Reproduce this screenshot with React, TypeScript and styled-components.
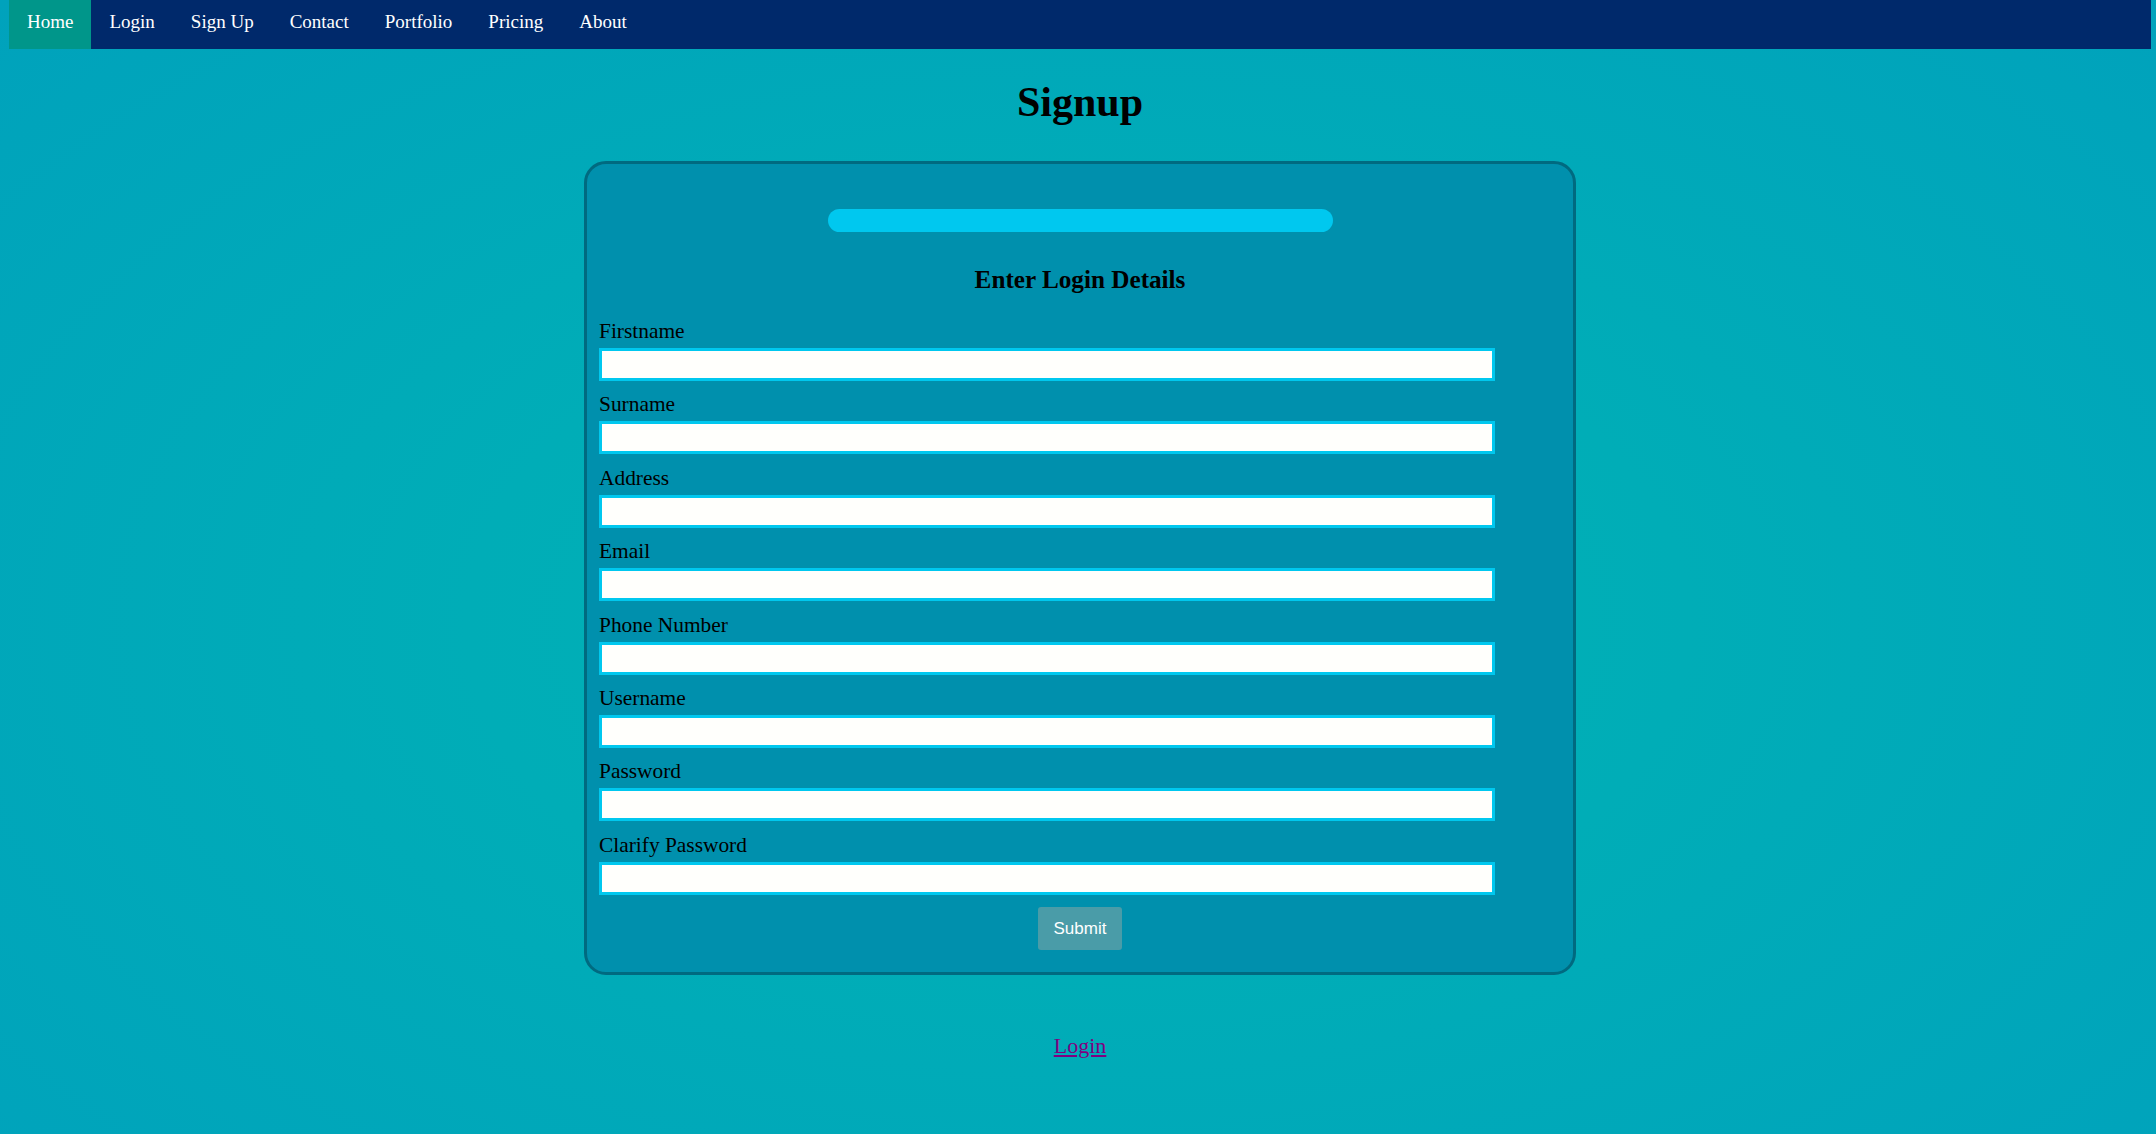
import React from 'react'
import styled, { createGlobalStyle } from 'styled-components'

const GlobalStyle = createGlobalStyle`
  html, body {
    margin: 0;
    padding: 0;
  }
  body {
    min-height: 100vh;
    font-family: "Liberation Serif", "Times New Roman", serif;
    font-size: 22px;
    color: #000;
    background: radial-gradient(ellipse at 50% 55%, #00b3b5 0%, #00adb7 40%, #00a2bc 100%);
    background-attachment: fixed;
  }
`

const Page = styled.div`
  min-height: 100vh;
  padding: 0 5px 0 9px;
  display: flex;
  flex-direction: column;
  align-items: center;
`

const NavBar = styled.nav`
  align-self: stretch;
  height: 49px;
  display: flex;
  background-color: #00296b;
`

const NavLink = styled.a<{ $active?: boolean }>`
  display: block;
  padding: 11px 18px 0;
  font-size: 19px;
  line-height: 22px;
  color: #fff;
  text-decoration: none;
  background-color: ${({ $active }) => ($active ? '#00968a' : 'transparent')};
  cursor: pointer;
`

const Title = styled.h1`
  margin: 29px 0 35px;
  font-size: 42px;
  line-height: 48px;
  font-weight: 700;
`

const Card = styled.form`
  width: 962px;
  padding: 0 12px 22px;
  background-color: #0090ad;
  border: 3px solid #006a80;
  border-radius: 22px;
  display: flex;
  flex-direction: column;
`

const ProgressBar = styled.div`
  align-self: center;
  width: 505px;
  height: 23px;
  margin-top: 45px;
  border-radius: 12px;
  background-color: #00c8ef;
`

const Heading = styled.h3`
  margin: 33px 0 24px;
  text-align: center;
  font-size: 25.2px;
  line-height: 30px;
  font-weight: 700;
`

const Field = styled.div`
  display: flex;
  flex-direction: column;
  margin-bottom: 11.4px;
`

const Label = styled.label`
  font-size: 21.4px;
  line-height: 25px;
  margin-bottom: 4px;
`

const Input = styled.input`
  box-sizing: border-box;
  width: 896px;
  height: 33px;
  border: 3px solid #00c8ef;
  background-color: #fffffc;
  outline: none;
`

const SubmitButton = styled.button`
  align-self: center;
  margin-top: 1px;
  height: 43px;
  padding: 0 16px;
  border: none;
  border-radius: 3px;
  background-color: #4a9ca8;
  color: #fff;
  font-family: "Liberation Sans", Arial, sans-serif;
  font-size: 17px;
  cursor: pointer;
`

const FooterLink = styled.a`
  margin-top: 58px;
  line-height: 25px;
  color: #800080;
  text-decoration: underline;
  cursor: pointer;
`

const navItems = ['Home', 'Login', 'Sign Up', 'Contact', 'Portfolio', 'Pricing', 'About']

const fields = [
  { label: 'Firstname', type: 'text' },
  { label: 'Surname', type: 'text' },
  { label: 'Address', type: 'text' },
  { label: 'Email', type: 'email' },
  { label: 'Phone Number', type: 'tel' },
  { label: 'Username', type: 'text' },
  { label: 'Password', type: 'password' },
  { label: 'Clarify Password', type: 'password' },
]

export default function App() {
  return (
    <>
      <GlobalStyle />
      <Page>
        <NavBar>
          {navItems.map((item) => (
            <NavLink key={item} $active={item === 'Home'}>
              {item}
            </NavLink>
          ))}
        </NavBar>
        <Title>Signup</Title>
        <Card onSubmit={(e) => e.preventDefault()}>
          <ProgressBar />
          <Heading>Enter Login Details</Heading>
          {fields.map((f) => (
            <Field key={f.label}>
              <Label>{f.label}</Label>
              <Input type={f.type} />
            </Field>
          ))}
          <SubmitButton type="submit">Submit</SubmitButton>
        </Card>
        <FooterLink>Login</FooterLink>
      </Page>
    </>
  )
}
